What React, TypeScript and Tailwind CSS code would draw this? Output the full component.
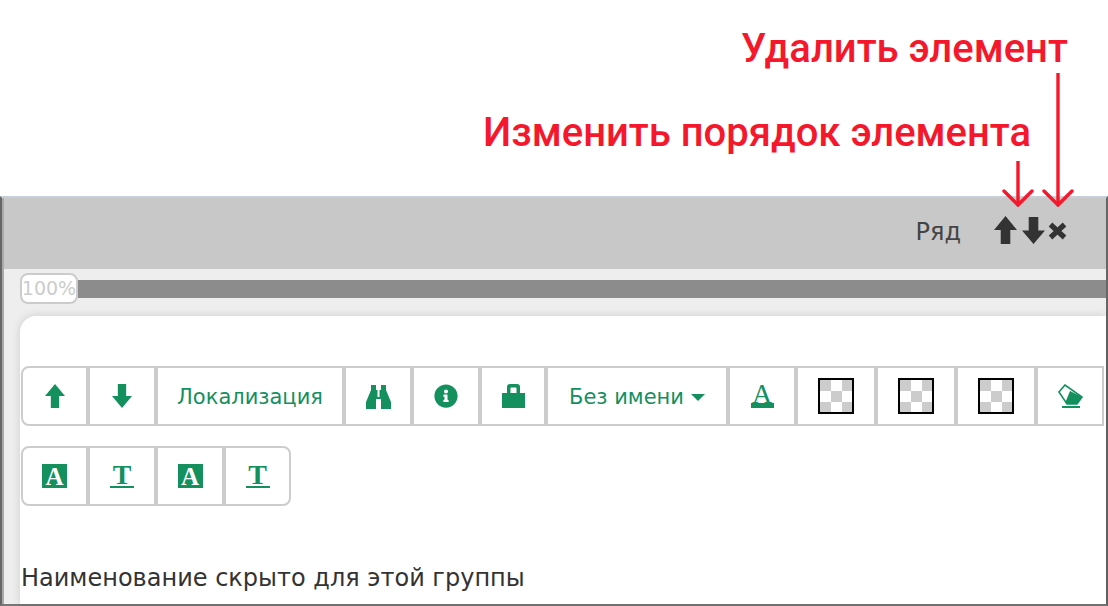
import React from "react";
import { FaInfoCircle } from "react-icons/fa";

const GREEN = "#14905f";
const CHECKER =
  "bg-[conic-gradient(#fff_25%,#ccc_0_50%,#fff_0_75%,#ccc_0)] bg-[length:22px_22px]";

function ArrowUp({ color, w, h }: { color: string; w: number; h: number }) {
  return (
    <svg width={w} height={h} viewBox="0 0 24 28" preserveAspectRatio="none" fill={color}>
      <path d="M12 0 24 14H17V28H7V14H0Z" />
    </svg>
  );
}

function ArrowDown({ color, w, h }: { color: string; w: number; h: number }) {
  return (
    <svg width={w} height={h} viewBox="0 0 24 28" preserveAspectRatio="none" fill={color}>
      <path d="M7 0H17V14H24L12 28 0 14H7Z" />
    </svg>
  );
}

function Binoculars() {
  return (
    <svg width="27" height="25" viewBox="0 0 27 25" fill={GREEN}>
      <path d="M6 1H11V6H12.5V13H14.5V6H16V1H21V6L26 18V25H16V15H11V25H1V18L6 6Z" />
    </svg>
  );
}

function Lock() {
  return (
    <svg width="23" height="24" viewBox="0 0 23 24" fill={GREEN}>
      <path
        d="M5 9V3Q5 0 8 0H15Q18 0 18 3V9H23V24H0V9ZM8.5 9H14.5V4Q14.5 3.5 14 3.5H9Q8.5 3.5 8.5 4Z"
        fillRule="evenodd"
      />
    </svg>
  );
}

function Eraser() {
  return (
    <svg width="25" height="24" viewBox="0 0 25 24">
      <path d="M1 8 7 1 24 13 19 20 9 20Z" fill="#fff" stroke={GREEN} strokeWidth="1.6" />
      <path d="M12 7 24 13 19 20 9 20 7.5 18Z" fill={GREEN} />
      <path d="M4 23H22" stroke={GREEN} strokeWidth="2" />
    </svg>
  );
}

function BoxA() {
  return (
    <span className="flex h-6 w-[25px] items-center justify-center bg-[#14905f] font-['Liberation_Serif',serif] text-[25px] font-bold leading-none text-white">
      A
    </span>
  );
}

function LetterT() {
  return (
    <span className="flex w-6 flex-col items-center font-['Liberation_Serif',serif] text-[28px] font-bold leading-[22px] text-[#14905f]">
      T<span className="h-[2px] w-6 bg-[#14905f]" />
    </span>
  );
}

function Btn({
  w,
  first,
  last,
  children,
}: {
  w: string;
  first?: boolean;
  last?: boolean;
  children: React.ReactNode;
}) {
  return (
    <div
      className={`flex h-[60px] items-center justify-center border-2 border-[#ccc] bg-white text-[#14905f] ${w} ${
        first ? "rounded-l-[8px]" : ""
      } ${last ? "rounded-r-[8px]" : ""}`}
    >
      {children}
    </div>
  );
}

function Swatch() {
  return <div className={`h-9 w-9 border-2 border-black ${CHECKER}`} />;
}

function Callout({ x, top, height }: { x: string; top: string; height: number }) {
  return (
    <svg
      className={`absolute ${x} ${top}`}
      width="32"
      height={height}
      viewBox={`0 0 32 ${height}`}
      fill="none"
      stroke="#f5182c"
      strokeWidth="3.4"
    >
      <path d={`M16 0V${height - 2}`} />
      <path strokeLinecap="round" d={`M2 ${height - 16}L16 ${height - 2}L30 ${height - 16}`} />
    </svg>
  );
}

export default function App() {
  return (
    <div className="relative flex h-[606px] w-[1108px] flex-col overflow-hidden bg-white font-['DejaVu_Sans',sans-serif] text-[#333]">
      <div className="absolute left-[741px] top-[27px] font-['Roboto',sans-serif] text-[40px] font-medium leading-[44px] text-[#f5182c]">
        Удалить элемент
      </div>
      <div className="absolute left-[483px] top-[111px] font-['Roboto',sans-serif] text-[40px] font-medium leading-[44px] text-[#f5182c]">
        Изменить порядок элемента
      </div>
      <Callout x="left-[1002px]" top="top-[161px]" height={46} />
      <Callout x="left-[1042px]" top="top-[73px]" height={134} />

      <div className="mt-[196px] flex h-[410px] flex-col border-b-2 border-l-2 border-r-2 border-t-2 border-b-[#777] border-l-[#666] border-r-[#666] border-t-[#c5d0d8]">
        <div className="flex flex-1 flex-col border-l-2 border-l-[#aaa] bg-[#eee]">
          <div className="flex h-[71px] items-center justify-end bg-[#c8c8c8] pr-[39px]">
            <span className="mb-[3px] mr-[33px] text-[24px] leading-[30px] text-[#444]">Ряд</span>
            <span className="mb-[7px]">
              <ArrowUp color="#333" w={23} h={28} />
            </span>
            <span className="mb-[7px] ml-[5px]">
              <ArrowDown color="#333" w={23} h={27} />
            </span>
            <svg className="ml-[3px] mb-[5px]" width="19" height="18" viewBox="0 0 19 18" stroke="#333" strokeWidth="5.2">
              <path d="M2.5 2.5 16.5 15.5M16.5 2.5 2.5 15.5" />
            </svg>
          </div>

          <div className="flex h-[47px] items-start pl-[16px] pt-[11px]">
            <div className="z-10 -mt-[7px] flex h-[31px] w-[58px] items-center justify-center whitespace-nowrap rounded-[8px] border-2 border-[#ccc] bg-white text-[19px] text-[#ccc]">
              100%
            </div>
            <div className="h-[18px] flex-1 bg-[#8c8c8c]" />
          </div>

          <div className="ml-[16px] flex flex-1 flex-col rounded-tl-[16px] bg-white pl-px pt-[50px] shadow-[0_0_10px_rgba(0,0,0,0.14)]">
            <div className="flex">
              <Btn w="w-[67px]" first>
                <ArrowUp color={GREEN} w={20} h={24} />
              </Btn>
              <Btn w="w-[68px]">
                <ArrowDown color={GREEN} w={20} h={24} />
              </Btn>
              <Btn w="w-[188px]">
                <span className="mt-[3px] text-[21px]">Локализация</span>
              </Btn>
              <Btn w="w-[68px]">
                <Binoculars />
              </Btn>
              <Btn w="w-[68px]">
                <FaInfoCircle size={24} />
              </Btn>
              <Btn w="w-[66px]">
                <Lock />
              </Btn>
              <Btn w="w-[182px]">
                <span className="mt-[3px] text-[21px]">Без имени</span>
                <span className="ml-[7px] mt-[3px] h-0 w-0 border-x-[7px] border-t-[7px] border-x-transparent border-t-[#14905f]" />
              </Btn>
              <Btn w="w-[68px]">
                <span className="flex flex-col items-center font-['Liberation_Serif',serif] text-[28px] leading-[19px]">
                  A<span className="h-[5px] w-[23px] bg-[#14905f]" />
                </span>
              </Btn>
              <Btn w="w-[80px]">
                <Swatch />
              </Btn>
              <Btn w="w-[80px]">
                <Swatch />
              </Btn>
              <Btn w="w-[80px]">
                <Swatch />
              </Btn>
              <Btn w="w-[68px]">
                <Eraser />
              </Btn>
            </div>

            <div className="mt-5 flex">
              <Btn w="w-[67px]" first>
                <BoxA />
              </Btn>
              <Btn w="w-[68px]">
                <LetterT />
              </Btn>
              <Btn w="w-[68px]">
                <BoxA />
              </Btn>
              <Btn w="w-[67px]" last>
                <LetterT />
              </Btn>
            </div>

            <div className="mt-[58px] text-[24px] leading-[28px] text-[#333]">
              Наименование скрыто для этой группы
            </div>
          </div>
        </div>
      </div>
    </div>
  );
}
